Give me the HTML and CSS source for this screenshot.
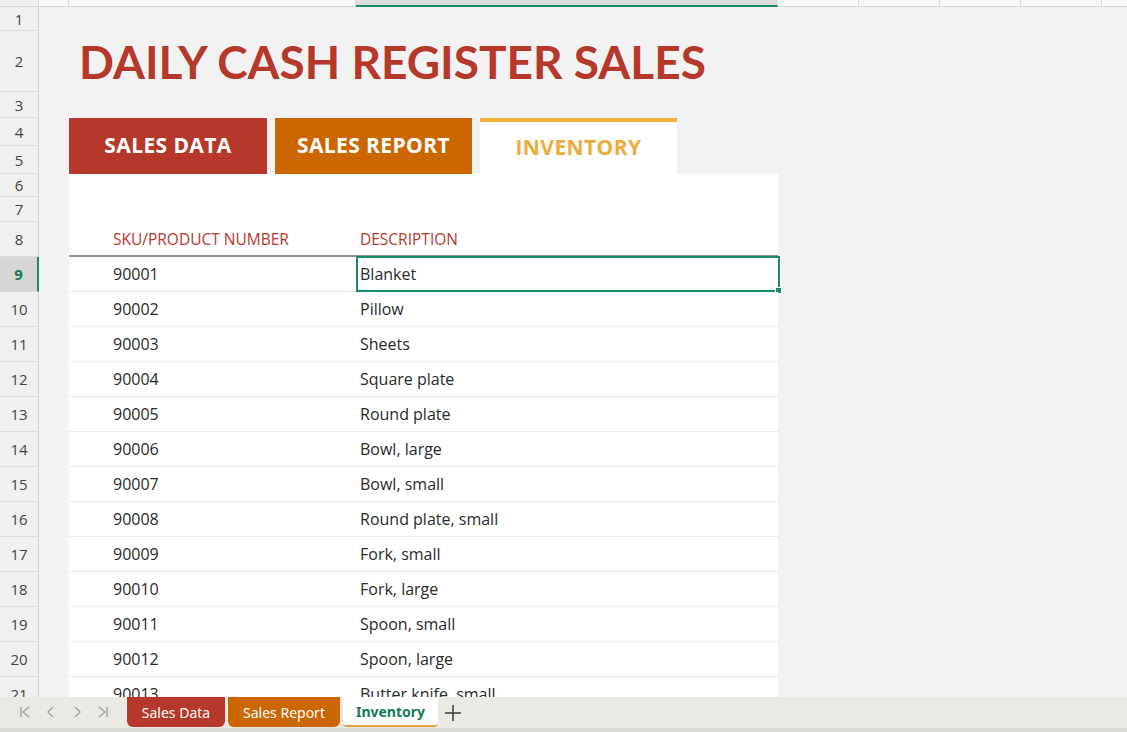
FILE: index.html
```html
<!DOCTYPE html>
<html lang="en">
<head>
<meta charset="UTF-8">
<title>Daily Cash Register Sales - Inventory</title>
<link rel="stylesheet" href="styles.css">
</head>
<body>

<div class="app">
    <!-- column headers (only the bottom edge shows) -->
    <div class="colheads">
        <div class="ch corner"></div>
        <div class="ch col-a"></div>
        <div class="ch col-b"></div>
        <div class="ch col-c active"></div>
        <div class="ch col-d"></div>
        <div class="ch col-d"></div>
        <div class="ch col-d"></div>
        <div class="ch col-d"></div>
        <div class="ch col-rest"></div>
    </div>

    <main class="sheet">
        <div class="row r1"><div class="rh">1</div></div>
        <div class="row r2">
            <div class="rh">2</div>
            <h1 class="title">DAILY CASH REGISTER SALES</h1>
        </div>
        <div class="row r3"><div class="rh">3</div></div>
        <div class="row r45">
            <div class="rh-stack">
                <div class="rh r4">4</div>
                <div class="rh r5">5</div>
            </div>
            <nav class="tabs">
                <a class="tab tab-data">SALES DATA</a>
                <a class="tab tab-report">SALES REPORT</a>
                <a class="tab tab-inv">INVENTORY</a>
            </nav>
        </div>
        <div class="row r6"><div class="rh">6</div><div class="panel"></div></div>
        <div class="row r7"><div class="rh">7</div><div class="panel"></div></div>
        <div class="row r8 head">
            <div class="rh">8</div>
            <div class="cell sku">SKU/PRODUCT NUMBER</div>
            <div class="cell desc">DESCRIPTION</div>
        </div>

        <div class="row data sel">
            <div class="rh">9</div>
            <div class="cell sku">90001</div>
            <div class="cell desc">Blanket<span class="selection"><i class="handle"></i></span></div>
        </div>
        <div class="row data"><div class="rh">10</div><div class="cell sku">90002</div><div class="cell desc">Pillow</div></div>
        <div class="row data"><div class="rh">11</div><div class="cell sku">90003</div><div class="cell desc">Sheets</div></div>
        <div class="row data"><div class="rh">12</div><div class="cell sku">90004</div><div class="cell desc">Square plate</div></div>
        <div class="row data"><div class="rh">13</div><div class="cell sku">90005</div><div class="cell desc">Round plate</div></div>
        <div class="row data"><div class="rh">14</div><div class="cell sku">90006</div><div class="cell desc">Bowl, large</div></div>
        <div class="row data"><div class="rh">15</div><div class="cell sku">90007</div><div class="cell desc">Bowl, small</div></div>
        <div class="row data"><div class="rh">16</div><div class="cell sku">90008</div><div class="cell desc">Round plate, small</div></div>
        <div class="row data"><div class="rh">17</div><div class="cell sku">90009</div><div class="cell desc">Fork, small</div></div>
        <div class="row data"><div class="rh">18</div><div class="cell sku">90010</div><div class="cell desc">Fork, large</div></div>
        <div class="row data"><div class="rh">19</div><div class="cell sku">90011</div><div class="cell desc">Spoon, small</div></div>
        <div class="row data"><div class="rh">20</div><div class="cell sku">90012</div><div class="cell desc">Spoon, large</div></div>
        <div class="row data"><div class="rh">21</div><div class="cell sku">90013</div><div class="cell desc">Butter knife, small</div></div>
    </main>

    <!-- sheet tabs -->
    <footer class="sheetbar">
        <div class="nav">
            <svg width="12" height="14" viewBox="0 0 12 14"><path d="M2 2v10M10 2L4 7l6 5" fill="none" stroke="#a3a3a3" stroke-width="1.4"/></svg>
            <svg width="12" height="14" viewBox="0 0 12 14"><path d="M8 2L3 7l5 5" fill="none" stroke="#a3a3a3" stroke-width="1.4"/></svg>
            <svg width="12" height="14" viewBox="0 0 12 14"><path d="M4 2l5 5-5 5" fill="none" stroke="#a3a3a3" stroke-width="1.4"/></svg>
            <svg width="12" height="14" viewBox="0 0 12 14"><path d="M2 2l6 5-6 5M10 2v10" fill="none" stroke="#a3a3a3" stroke-width="1.4"/></svg>
        </div>
        <div class="stabs">
            <span class="stab s-data">Sales Data</span>
            <span class="stab s-report">Sales Report</span>
            <span class="stab s-inv">Inventory</span>
        </div>
        <svg class="add" width="18" height="18" viewBox="0 0 18 18"><path d="M9 1v16M1 9h16" stroke="#3a3a3a" stroke-width="1.5"/></svg>
    </footer>
</div>

</body>
</html>
```

FILE: styles.css
```css
body {
    margin: 0;
    padding: 0;
    font-family: "Open Sans", "Liberation Sans", sans-serif;
    color: #333333;
    background-color: #f2f2f2;
}
.app {
    width: 1127px;
    height: 732px;
    display: flex;
    flex-direction: column;
    overflow: hidden;
}

/* column header strip */
.colheads {
    display: flex;
    height: 6px;
    flex: none;
    border-bottom: 1px solid #d6d6d6;
    background-color: #f7f7f7;
}
.ch {
    height: 6px;
    border-right: 1px solid #dadada;
    box-sizing: border-box;
}
.corner { width: 39px; background-color: #f0f0f0; }
.col-a { width: 30px; }
.col-b { width: 287px; }
.col-c { width: 422px; }
.col-d { width: 81px; }
.col-rest { flex: 1; border-right: none; }
.ch.active {
    background-color: #dcdcdc;
    border-bottom: 2px solid #1a8c63;
    height: 7px;
}

/* grid */
.sheet {
    flex: 1;
    overflow: hidden;
}
.row {
    display: flex;
    align-items: stretch;
}
.rh {
    width: 39px;
    flex: none;
    box-sizing: border-box;
    border-right: 1px solid #d4d4d4;
    border-bottom: 1px solid #dcdcdc;
    background-color: #f0f0f0;
    color: #444444;
    font-size: 15px;
    display: flex;
    align-items: center;
    justify-content: center;
    margin-right: 30px;
}
.rh-stack {
    display: flex;
    flex-direction: column;
    margin-right: 30px;
}
.rh-stack .rh { margin-right: 0; }
.r1 { height: 24px; }
.r2 { height: 61px; }
.r3 { height: 26px; }
.r4 { height: 28px; }
.r5 { height: 28px; }
.r6 { height: 23px; }
.r7 { height: 25px; }
.r8 { height: 35px; }
.data { height: 35px; }

.title {
    margin: 0;
    padding: 3px 0 0 10px;
    font-family: "Lato", sans-serif;
    font-weight: 700;
    font-size: 46px;
    color: #b5382a;
    letter-spacing: 0;
    line-height: 55px;
    white-space: nowrap;
}

/* navigation buttons */
.tabs {
    display: flex;
    gap: 8px;
}
.tab {
    width: 198px;
    box-sizing: border-box;
    display: flex;
    align-items: center;
    justify-content: center;
    padding-bottom: 2px;
    color: #ffffff;
    font-size: 21px;
    font-weight: 700;
    letter-spacing: 0.4px;
}
.tab-data { background-color: #b5382a; }
.tab-report { background-color: #cc6600; width: 197px; }
.tab-inv {
    width: 197px;
    background-color: #ffffff;
    color: #ebab3e;
    border-top: 4px solid #f0b03e;
}

.panel {
    width: 709px;
    background-color: #ffffff;
}
.cell {
    background-color: #ffffff;
    box-sizing: border-box;
    display: flex;
    align-items: center;
    font-size: 16px;
    white-space: nowrap;
}
.sku {
    width: 287px;
    padding-left: 44px;
}
.desc {
    width: 422px;
    padding-left: 4px;
    position: relative;
}
.head .cell {
    color: #b5382a;
    font-size: 15.5px;
    border-bottom: 2px solid #8f8f8f;
}
.data .cell {
    border-bottom: 1px solid #ececec;
    color: #2a2a2a;
}

/* selected cell */
.sel .rh {
    background-color: #d6d6d6;
    color: #1a7a55;
    font-weight: 700;
    border-right: 2px solid #1a8c63;
}
.selection {
    position: absolute;
    left: 0;
    top: -1px;
    right: -2px;
    bottom: -1px;
    border: 2px solid #1a8c63;
}
.handle {
    position: absolute;
    right: -4px;
    bottom: -4px;
    width: 5px;
    height: 5px;
    background-color: #1a8c63;
    border: 1px solid #ffffff;
}

/* sheet tab bar */
.sheetbar {
    height: 35px;
    flex: none;
    box-sizing: border-box;
    background-color: #ebe9e4;
    border-bottom: 4px solid #dcdad5;
    display: flex;
    align-items: flex-start;
    font-family: "Noto Sans", "Open Sans", sans-serif;
}
.nav {
    display: flex;
    gap: 14px;
    padding: 8px 0 0 19px;
    width: 108px;
}
.stabs {
    display: flex;
    gap: 3px;
}
.stab {
    height: 30px;
    box-sizing: border-box;
    display: flex;
    align-items: center;
    justify-content: center;
    font-size: 14px;
    color: #ffffff;
    border-radius: 0 0 6px 6px;
}
.s-data { width: 98px; background-color: #b5382a; }
.s-report { width: 112px; background-color: #cc6600; }
.s-inv {
    width: 95px;
    background-color: #ffffff;
    color: #157a55;
    font-weight: 700;
    border-bottom: 2px solid #e2a23c;
    border-radius: 0 0 4px 4px;
}
.add {
    margin: 7px 0 0 6px;
}
```
